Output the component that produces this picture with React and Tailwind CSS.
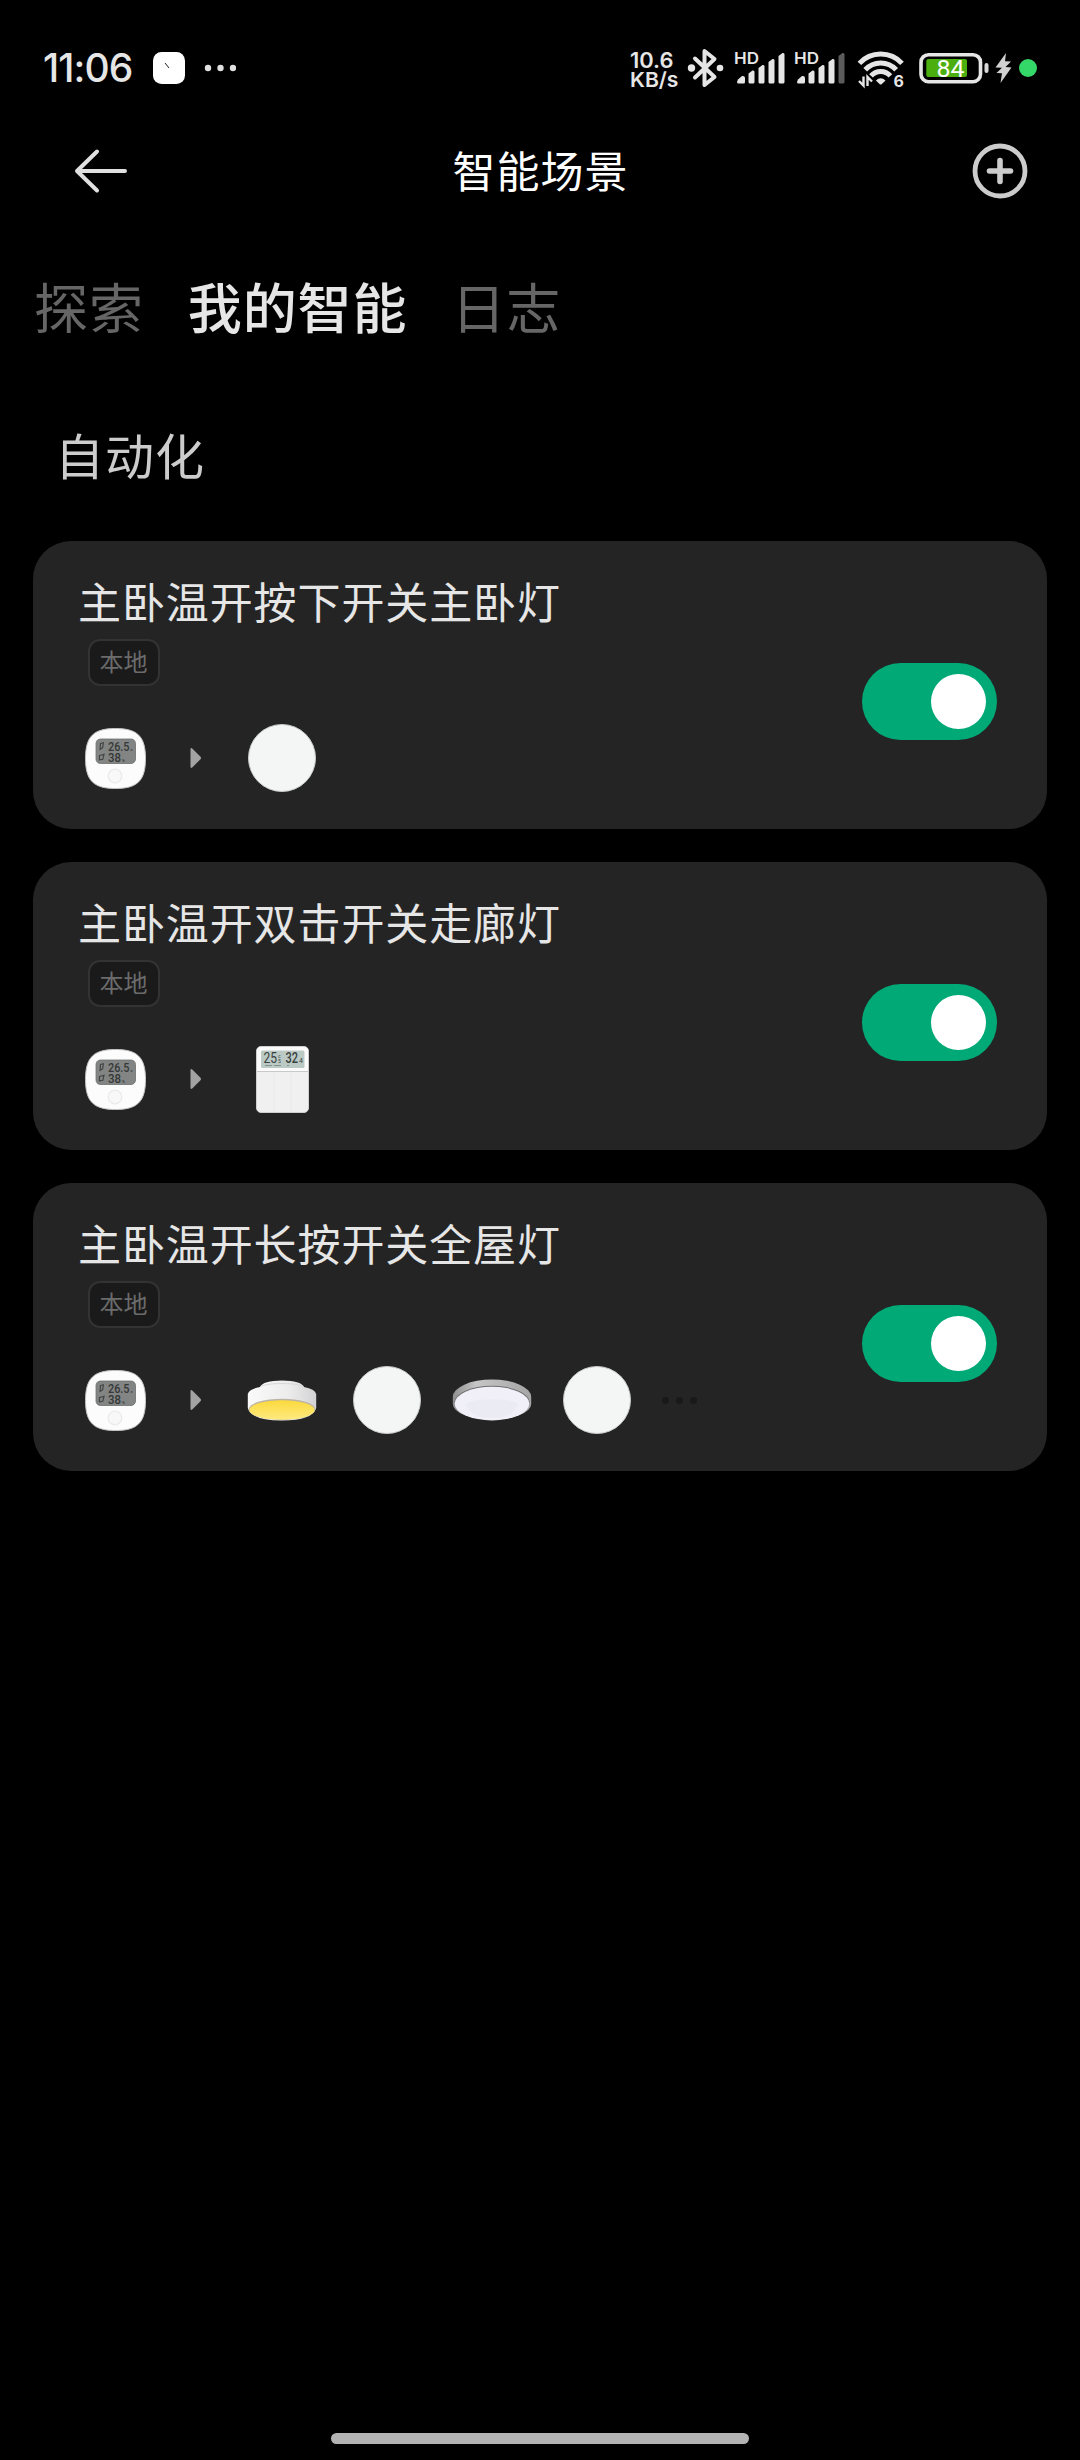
import { useState } from 'react';

const scenes = [
  { id: 1, name: '主卧温开按下开关主卧灯', actions: ['round'] },
  { id: 2, name: '主卧温开双击开关走廊灯', actions: ['panel'] },
  { id: 3, name: '主卧温开长按开关全屋灯', actions: ['lamp', 'round', 'ceiling', 'round'], more: true },
];

const tabs = ['探索', '我的智能', '日志'];

function Signal({ weak }) {
  return (
    <svg width="51" height="34" viewBox="0 0 51 34" className="shrink-0 overflow-visible" fill="#e6e6e6">
      <text x="-1" y="14" fontSize="15.5" fontWeight="600" fontFamily="Inter, sans-serif" textLength="25" lengthAdjust="spacingAndGlyphs">HD</text>
      <path d="M3 29.5 L7 26 Q10 25.5 10 28 V32 Q10 33.5 8.5 33.5 H3.5 Q2 33.5 2 32Z" />
      <path d="M13.5 23.5 L17.5 20.5 Q19.5 20 19.5 22 V32 Q19.5 33.5 18 33.5 H15 Q13.5 33.5 13.5 32Z" />
      <path d="M23.5 18 L27.5 15 Q29.5 14.5 29.5 16.5 V32 Q29.5 33.5 28 33.5 H25 Q23.5 33.5 23.5 32Z" />
      <path d="M33.5 12 L37.5 9 Q39.5 8.5 39.5 10.5 V32 Q39.5 33.5 38 33.5 H35 Q33.5 33.5 33.5 32Z" />
      <path d="M43.5 6 L47.5 3 Q49.5 2.5 49.5 4.5 V32 Q49.5 33.5 48 33.5 H45 Q43.5 33.5 43.5 32Z" fill={weak ? '#5c5c5c' : '#e6e6e6'} />
    </svg>
  );
}

function StatusBar() {
  return (
    <div className="flex items-start h-[120px] pt-[48px] pl-[43px]">
      <span className="w-[110px] h-10 font-[Inter] font-medium text-[39px] leading-[40px] tracking-[-0.9px] text-[#e6e6e6]">11:06</span>
      <svg width="32" height="32" viewBox="0 0 32 32" className="mt-1">
        <rect width="32" height="32" rx="8.5" fill="#fff" />
        <path d="M12 11 L16 16" stroke="#222" strokeWidth="1" />
      </svg>
      <svg width="32" height="8" viewBox="0 0 32 8" className="mt-4 ml-[19px]" fill="#e0e0e0">
        <circle cx="4" cy="4" r="3.2" />
        <circle cx="16.5" cy="4" r="3.2" />
        <circle cx="29" cy="4" r="3.2" />
      </svg>

      <div className="flex ml-[394px]">
        <svg width="57" height="42" viewBox="0 0 57 42" className="shrink-0" fill="#e6e6e6" fontFamily="Inter, sans-serif" fontWeight="600">
          <text x="0" y="20" fontSize="21.5" textLength="43.5" lengthAdjust="spacingAndGlyphs">10.6</text>
          <text x="0" y="39" fontSize="20.5" textLength="48.5" lengthAdjust="spacingAndGlyphs">KB/s</text>
        </svg>
        <svg width="38" height="40" viewBox="0 0 38 40" className="shrink-0">
          <path d="M8 10.5 L27.5 29 L17.5 37 V3 L27.5 11 L8 29.5" fill="none" stroke="#e6e6e6" strokeWidth="4" strokeLinecap="round" strokeLinejoin="round" />
          <circle cx="4.5" cy="20" r="3.7" fill="#e6e6e6" />
          <circle cx="33" cy="20" r="3.3" fill="#e6e6e6" />
        </svg>
        <div className="flex gap-[9px] pl-[10px] pt-[2px]">
          <Signal />
          <Signal weak />
        </div>
        <svg width="50" height="42" viewBox="0 0 50 42" className="ml-[11px] shrink-0 overflow-visible">
          <g fill="none" stroke="#e6e6e6" strokeWidth="5">
            <path d="M2.4 15.4 A29 29 0 0 1 45 15.4" />
            <path d="M8.2 21.8 A21 21 0 0 1 39.2 21.8" />
            <path d="M14 27.8 A13 13 0 0 1 33.4 27.8" />
          </g>
          <path d="M18.9 32.5 Q23.7 28.2 28.5 32.5 L24.6 36.2 Q23.7 37 22.8 36.2Z" fill="#e6e6e6" />
          <path d="M6.5 28.5 V37.5 L2 33 M10.5 38 V29 L15 33.5" fill="none" stroke="#e6e6e6" strokeWidth="2.4" />
          <text x="36.5" y="38.5" fontSize="16" fontWeight="700" fontFamily="Inter, sans-serif" fill="#e6e6e6">6</text>
        </svg>
        <svg width="72" height="40" viewBox="0 0 72 40" className="ml-[12px] shrink-0">
          <rect x="2" y="6.7" width="59.5" height="27" rx="7.5" fill="none" stroke="#e6e6e6" strokeWidth="3.6" />
          <rect x="7.3" y="11" width="40.7" height="18" rx="2" fill="#4caf10" />
          <rect x="65.5" y="15" width="4" height="10" rx="2" fill="#d8d8d8" />
          <text x="17.5" y="28.6" fontSize="24" fontWeight="400" fontFamily="Roboto, sans-serif" fill="#fff" textLength="28" lengthAdjust="spacingAndGlyphs">84</text>
        </svg>
        <svg width="20" height="40" viewBox="0 0 20 40" className="ml-[3px] shrink-0">
          <path d="M12 5 L1.5 19.5 L8 19.8 L2.5 25 L8 25.2 L6.5 35 L17.5 19.5 L11.5 19 L17 13.5 L11 13.2Z" fill="#d0d0d0" />
        </svg>
        <div className="size-[18px] rounded-full bg-[#34d868] mt-[11px] ml-[5px] shrink-0" />
      </div>
    </div>
  );
}

function Thermometer() {
  return (
    <svg width="61" height="61" viewBox="0 0 61 61" className="shrink-0">
      <path d="M30.5 0.5 C52 0.5 60.5 8 60.5 30.5 C60.5 53 52 60.5 30.5 60.5 C9 60.5 0.5 53 0.5 30.5 C0.5 8 9 0.5 30.5 0.5Z" fill="#fcfcfc" stroke="#c4c4c4" strokeWidth="1" />
      <rect x="11" y="11" width="39.5" height="24.5" rx="4.5" fill="#828584" stroke="#6c6f6e" strokeWidth="0.8" />
      <g fontFamily="Roboto, sans-serif" fill="#353837" fontWeight="500">
        <text x="23" y="22.8" fontSize="13.5" textLength="21.5" lengthAdjust="spacingAndGlyphs">26.5</text>
        <text x="23" y="34.3" fontSize="13.5" textLength="13" lengthAdjust="spacingAndGlyphs">38</text>
        <text x="45.5" y="22.5" fontSize="4">c</text>
        <text x="37" y="33.5" fontSize="4">%</text>
      </g>
      <path d="M15.5 15.5 l2.8 -0.8 l-0.6 5 l-2.6 1.6z M14.5 27.5 l4.5 -1.2 l-1.2 5 l-3.4 0.6z" fill="none" stroke="#414443" strokeWidth="1.2" />
      <circle cx="30" cy="48" r="6.8" fill="#f8f8f8" stroke="#ebebeb" strokeWidth="1.3" />
    </svg>
  );
}

function WallPanel() {
  return (
    <svg width="53" height="67" viewBox="0 0 53 67">
      <rect x="0.5" y="0.5" width="52" height="66" rx="4.5" fill="#f0f0f0" stroke="#cfcfcf" />
      <path d="M1 25 V5 Q1 1 5 1 H48 Q52 1 52 5 V25Z" fill="#fbfbfb" />
      <rect x="5" y="4.5" width="43.5" height="17.5" rx="1.5" fill="#bccac5" />
      <g fontFamily="Roboto, sans-serif" fill="#39413f">
        <text x="7.5" y="17" fontSize="14.5" fontWeight="400" textLength="13.5" lengthAdjust="spacingAndGlyphs">25</text>
        <text x="29.5" y="17" fontSize="14.5" fontWeight="500" textLength="12.5" lengthAdjust="spacingAndGlyphs">32</text>
        <text x="22" y="11.5" fontSize="5">c</text>
        <text x="22" y="17" fontSize="5">5</text>
        <text x="43" y="16.5" fontSize="7">4</text>
      </g>
      <path d="M9 19.5 h7 M18 19.5 h7 M31 19.5 h2" stroke="#84908c" strokeWidth="1.2" />
      <path d="M1 25.5 H52" stroke="#c9c9c9" />
      <path d="M18 27 V65 M35 27 V65" stroke="#e8e8e8" />
    </svg>
  );
}

function DrumLamp() {
  return (
    <svg width="70" height="41" viewBox="0 0 70 41">
      <defs>
        <linearGradient id="drum" x1="0" x2="1">
          <stop offset="0" stopColor="#fafafa" />
          <stop offset="0.6" stopColor="#ececec" />
          <stop offset="1" stopColor="#d2d2d4" />
        </linearGradient>
        <linearGradient id="glow" x1="0" x2="0" y1="0" y2="1">
          <stop offset="0" stopColor="#fbd93c" />
          <stop offset="1" stopColor="#fdea80" />
        </linearGradient>
      </defs>
      <path d="M0.8 14 Q2 9 13 7 Q16 0.5 35 0.5 Q54 0.5 57 7 Q68 9 69.2 14 V28 Q66 40.3 35 40.5 Q4 40.3 0.8 28Z" fill="url(#drum)" />
      <path d="M13.5 6.5 Q20 3.5 35 3.5 Q50 3.5 56.5 6.5" fill="none" stroke="#d8d8d9" strokeWidth="1" />
      <ellipse cx="35" cy="29.3" rx="33.3" ry="10.6" fill="#bcb4a5" />
      <ellipse cx="35" cy="30" rx="32.6" ry="9.8" fill="url(#glow)" />
    </svg>
  );
}

function CeilingLamp() {
  return (
    <svg width="80" height="42" viewBox="0 0 80 42">
      <defs>
        <linearGradient id="rim" x1="0" x2="1">
          <stop offset="0" stopColor="#8f8f8f" />
          <stop offset="0.3" stopColor="#c6c6c6" />
          <stop offset="1" stopColor="#a5a5a5" />
        </linearGradient>
      </defs>
      <path d="M0.8 18 A39.2 17.5 0 0 1 79.2 18 V25 A39.2 15.5 0 0 1 0.8 25Z" fill="url(#rim)" />
      <ellipse cx="40" cy="23.6" rx="37.8" ry="16.8" fill="#707070" />
      <ellipse cx="40" cy="24.6" rx="37.4" ry="16.8" fill="#f1f0f8" />
      <path d="M14 25 C20 19 60 19 66 25 C62 35 54 39 40 39 C26 39 18 35 14 25Z" fill="#e8e7f1" opacity="0.6" />
    </svg>
  );
}

function DeviceIcon({ type }) {
  return (
    <div className="w-20 h-[68px] flex items-center justify-center">
      {type === 'round' && <div className="size-[68px] rounded-full bg-[#f4f6f6] border border-[#c8caca]" />}
      {type === 'panel' && <WallPanel />}
      {type === 'lamp' && <DrumLamp />}
      {type === 'ceiling' && <CeilingLamp />}
    </div>
  );
}

function SceneCard({ scene }) {
  const [enabled, setEnabled] = useState(true);

  return (
    <div className="flex h-[288px] rounded-[38px] bg-[#242424] pl-[45px] pr-[50px]">
      <div className="flex-1">
        <h3 className="mt-[33px] h-[52px] text-[43px] leading-[52px] tracking-[0.9px] text-[#e6e6e6] whitespace-nowrap">{scene.name}</h3>
        <div className="mt-[13px] ml-[10px] w-[72px] h-[47px] flex items-center justify-center rounded-xl border-2 border-[#333] bg-[#1a1a1a] pb-[3px] pr-px text-2xl text-[#6b6b6b] whitespace-nowrap">
          本地
        </div>
        <div className="mt-[38px] ml-[7px] flex items-center h-[68px]">
          <Thermometer />
          <svg width="12" height="22" viewBox="0 0 12 22" className="ml-[44px] mr-[40px] shrink-0">
            <path d="M0.5 2.5 Q0.5 0 2.5 1.8 L10.5 9.8 Q11.7 11 10.5 12.2 L2.5 20.2 Q0.5 22 0.5 19.5Z" fill="#a3a3a3" />
          </svg>
          <div className="flex gap-[25px]">
            {scene.actions.map((type, i) => <DeviceIcon key={i} type={type} />)}
          </div>
          {scene.more && (
            <div className="flex gap-[7px] ml-[25px]">
              <span className="size-[7px] rounded-full bg-[#191919]" />
              <span className="size-[7px] rounded-full bg-[#191919]" />
              <span className="size-[7px] rounded-full bg-[#191919]" />
            </div>
          )}
        </div>
      </div>
      <button
        onClick={() => setEnabled(!enabled)}
        className={`mt-[122px] w-[135px] h-[77px] p-[11px] rounded-full flex shrink-0 ${enabled ? 'bg-[#00a976] justify-end' : 'bg-[#555] justify-start'}`}
      >
        <span className="size-[55px] rounded-full bg-white" />
      </button>
    </div>
  );
}

export default function App() {
  const [active, setActive] = useState('我的智能');

  return (
    <div className="w-[1080px] h-[2460px] bg-black flex flex-col overflow-hidden font-['Noto_Sans_CJK_SC',sans-serif]">
      <StatusBar />

      <header className="h-[102px] grid grid-cols-[1fr_auto_1fr] items-center pl-[74px] pr-[52px]">
        <svg width="56" height="46" viewBox="0 0 56 46" fill="none" stroke="#e0e0e0" strokeWidth="4" strokeLinecap="round" strokeLinejoin="round">
          <path d="M51 23 H3 M23 3.5 L3 23 L23 42.5" />
        </svg>
        <h1 className="-ml-[21px] pb-1 text-[43px] leading-[60px] tracking-[1px] text-white">智能场景</h1>
        <svg width="56" height="56" viewBox="0 0 56 56" fill="none" stroke="#ccc" className="justify-self-end">
          <circle cx="28" cy="28" r="25" strokeWidth="4.8" />
          <path d="M28 17.5 V38.5 M17.5 28 H38.5" strokeWidth="5.6" strokeLinecap="round" />
        </svg>
      </header>

      <nav className="flex gap-[44px] pl-[34px] mt-[44px] h-[80px]">
        {tabs.map((tab) => (
          <button
            key={tab}
            onClick={() => setActive(tab)}
            className={`text-[54px] leading-[80px] tracking-[0.9px] ${tab === active ? 'font-medium text-[#e6e6e6]' : 'text-[#666]'}`}
          >
            {tab}
          </button>
        ))}
      </nav>

      <h2 className="mt-[72px] ml-[55px] h-[72px] text-[49px] leading-[72px] tracking-[1px] text-[#ccc]">自动化</h2>

      <div className="mt-[51px] px-[33px] flex flex-col gap-[33px]">
        {scenes.map((s) => <SceneCard key={s.id} scene={s} />)}
      </div>

      <div className="mt-auto mb-4 w-[418px] h-[11px] rounded-full bg-[#b3b3b3] self-center" />
    </div>
  );
}
